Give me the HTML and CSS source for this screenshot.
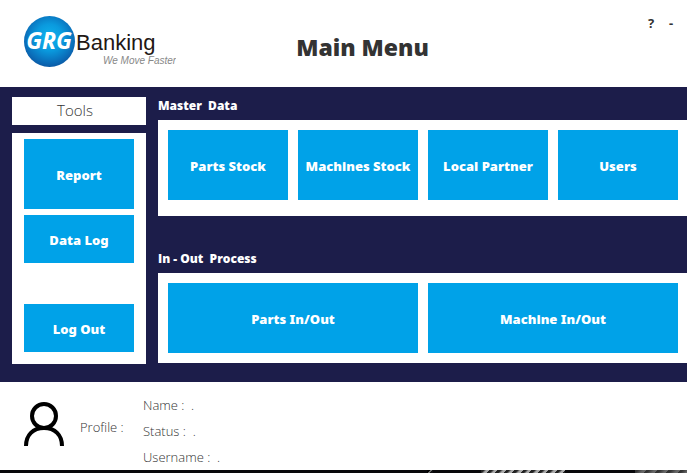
FILE: index.html
```html
<!DOCTYPE html>
<html lang="en">
<head>
<meta charset="utf-8">
<title>Main Menu</title>
<link rel="stylesheet" href="styles.css">
</head>
<body>
<header class="header">
  <svg class="logo" viewBox="0 0 152 54" role="img" aria-label="GRG Banking">
    <defs>
      <radialGradient id="ball" cx="50%" cy="42%" r="58%">
        <stop offset="0" stop-color="#10b4ee"/>
        <stop offset="0.45" stop-color="#0a9ade"/>
        <stop offset="0.85" stop-color="#0a6cb8"/>
        <stop offset="1" stop-color="#0b5aa5"/>
      </radialGradient>
    </defs>
    <circle cx="25.5" cy="25.5" r="25.5" fill="url(#ball)"/>
    <text class="logo-mark" x="25" y="33" text-anchor="middle">GRG</text>
    <text class="logo-name" x="52" y="34">Banking</text>
    <text class="logo-tagline" x="79" y="48">We Move Faster</text>
  </svg>
  <h1 class="title">Main Menu</h1>
  <div class="window-controls">
    <button type="button" class="window-button" aria-label="Help">?</button>
    <button type="button" class="window-button" aria-label="Minimize">-</button>
  </div>
</header>

<main class="main">
  <aside class="sidebar">
    <h2 class="tools-title">Tools</h2>
    <nav class="tools">
      <button type="button" class="tile">Report</button>
      <button type="button" class="tile tile-short">Data Log</button>
      <button type="button" class="tile tile-short logout">Log Out</button>
    </nav>
  </aside>
  <div class="content">
    <section class="section section-master">
      <h2 class="section-title">Master&nbsp; Data</h2>
      <div class="panel panel-master">
        <button type="button" class="tile">Parts Stock</button>
        <button type="button" class="tile">Machines Stock</button>
        <button type="button" class="tile">Local Partner</button>
        <button type="button" class="tile">Users</button>
      </div>
    </section>
    <section class="section">
      <h2 class="section-title">In - Out&nbsp; Process</h2>
      <div class="panel panel-process">
        <button type="button" class="tile">Parts In/Out</button>
        <button type="button" class="tile">Machine In/Out</button>
      </div>
    </section>
  </div>
</main>

<footer class="profile">
  <svg class="avatar" viewBox="0 0 40 44" aria-hidden="true">
    <circle cx="20" cy="14" r="12"/>
    <path d="M2 44C2 33 9 26 20 26S38 33 38 44"/>
  </svg>
  <span class="profile-label">Profile :</span>
  <ul class="details">
    <li>Name :&nbsp; .</li>
    <li>Status :&nbsp; .</li>
    <li>Username :&nbsp; .</li>
  </ul>
</footer>
<div class="edge"><span class="edge-nick"></span><span class="edge-hatch"></span><span class="edge-glow"></span></div>
</body>
</html>
```
FILE: styles.css
```css
* {
  box-sizing: border-box;
}

body {
  margin: 0;
  background: #fff;
  color: #333;
  font-family: "Open Sans", "Noto Sans", sans-serif;
  font-size: 14px;
}

h1,
h2,
ul {
  margin: 0;
  padding: 0;
}

.header {
  display: grid;
  grid-template-columns: 152px 1fr 132px;
  align-items: start;
  padding: 16px 6px 16px 24px;
  height: 87px;
}

.logo {
  width: 152px;
  height: 54px;
}

.logo-mark {
  fill: #fff;
  font: italic 700 23px "Open Sans", sans-serif;
}

.logo-name {
  fill: #231815;
  font: 22px "Liberation Sans", sans-serif;
}

.logo-tagline {
  fill: #888;
  font: italic 10px "Liberation Sans", sans-serif;
}

.title {
  padding-top: 15px;
  font-family: "Noto Sans", sans-serif;
  font-size: 23px;
  font-weight: 900;
  line-height: 32px;
  text-align: center;
}

.window-controls {
  display: flex;
  justify-content: flex-end;
}

.window-button {
  width: 20px;
  height: 14px;
  padding: 0;
  border: 0;
  background: none;
  color: #333;
  font: 700 13px/14px "Noto Sans", sans-serif;
}

.main {
  display: grid;
  grid-template-columns: 134px 1fr;
  gap: 12px;
  padding: 10px 0 18px 12px;
  background: #1c1d4a;
}

.sidebar {
  display: flex;
  flex-direction: column;
  gap: 8px;
}

.tools-title {
  height: 28px;
  padding-right: 8px;
  background: #fff;
  font-size: 15px;
  font-weight: 300;
  line-height: 26px;
  text-align: center;
}

.tools {
  display: flex;
  flex: 1;
  flex-direction: column;
  gap: 6px;
  padding: 6px 12px 12px;
  background: #fff;
}

.tile {
  height: 70px;
  padding: 2px 0 0;
  border: 0;
  background: #00a2e8;
  color: #fff;
  font: 900 13px/20px "Noto Sans", sans-serif;
  white-space: nowrap;
}

.tile-short {
  height: 48px;
}

.logout {
  margin-top: 35px;
}

.content {
  display: flex;
  flex-direction: column;
  gap: 34px;
}

.section-title {
  padding-bottom: 5px;
  color: #fff;
  font-size: 12px;
  font-weight: 800;
  line-height: 18px;
}

.panel {
  display: grid;
  gap: 10px;
  padding: 10px 9px 10px 10px;
  background: #fff;
}

.panel-master {
  grid-template-columns: repeat(4, 1fr);
  padding-bottom: 16px;
}

.panel-process {
  grid-template-columns: repeat(2, 1fr);
}

.profile {
  display: flex;
  align-items: flex-start;
  padding: 10px 24px 0;
  font-size: 13px;
  font-weight: 300;
  line-height: 26px;
}

.avatar {
  width: 40px;
  height: 44px;
  margin-top: 10px;
  fill: none;
  stroke: #000;
  stroke-width: 4;
}

.profile-label {
  width: 63px;
  margin: 22px 0 0 16px;
}

.details {
  list-style: none;
}

.edge {
  display: flex;
  justify-content: flex-end;
  height: 3px;
  background: #08080a;
}

.edge-nick {
  width: 6px;
  margin-right: 48px;
  background: linear-gradient(135deg, #000 35%, #aaa 50%, #111 65%);
}

.edge-hatch {
  width: 84px;
  margin-right: 70px;
  background: repeating-linear-gradient(135deg, #222 0 2px, #aaa 4px 6px);
}

.edge-glow {
  width: 52px;
  background: repeating-linear-gradient(135deg, #333 0 2px, #666 6px 8px);
}
```
